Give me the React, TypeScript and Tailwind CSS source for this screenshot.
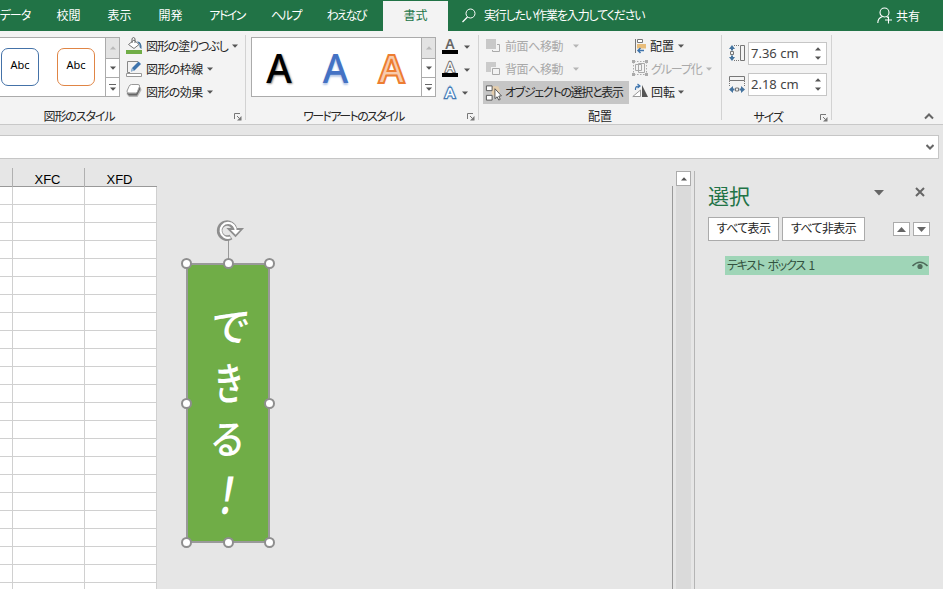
import type { ReactNode } from 'react'
import clsx from 'clsx'

const TABS = [
  { label: 'データ', cls: 'w-[56px] tracking-[-1px]' },
  { label: '校閲', cls: 'w-[51px]' },
  { label: '表示', cls: 'w-[51px]' },
  { label: '開発', cls: 'w-[51px]' },
  { label: 'アドイン', cls: 'w-[62px] tracking-[-1.6px]' },
  { label: 'ヘルプ', cls: 'w-[56px] tracking-[-1.4px]' },
  { label: 'わえなび', cls: 'w-[64px] tracking-[-1.9px]' },
]

const ROWS = Array.from({ length: 23 }, (_, i) => i)

// resize handles, relative to the text box
const HANDLES = [
  'left-[-7px] top-[-7px]',
  'left-[35px] top-[-7px]',
  'left-[76px] top-[-7px]',
  'left-[-7px] top-[133px]',
  'left-[76px] top-[133px]',
  'left-[-7px] top-[272px]',
  'left-[35px] top-[272px]',
  'left-[76px] top-[272px]',
]

function Caret({ up, className }: { up?: boolean; className?: string }) {
  return (
    <svg width="6" height="4" viewBox="0 0 6 4" className={clsx('shrink-0', className ?? 'text-[#555]')}>
      <path d={up ? 'M0 3.500h6L3 .3z' : 'M0 .5h6L3 3.700z'} fill="currentColor" />
    </svg>
  )
}

function Launcher() {
  return (
    <svg width="8" height="8" viewBox="0 0 8 8" className="shrink-0" fill="none" stroke="#777">
      <path d="M.5 6V.5H6M3 3l2.500 2.500" />
      <path d="M7.500 3v4.500H3L7.500 3z" fill="#777" stroke="none" />
    </svg>
  )
}

function GalleryScroll() {
  return (
    <div className="flex w-[14px] shrink-0 flex-col border-l border-[#ababab]">
      <div className="flex h-[20px] items-center justify-center bg-[#e3e3e3]">
        <Caret up className="text-[#b9b9b9]" />
      </div>
      <div className="flex h-[19px] items-center justify-center border-t border-[#ababab]">
        <Caret />
      </div>
      <div className="flex flex-1 flex-col items-center justify-center gap-[2px] border-t border-[#ababab]">
        <div className="h-px w-[7px] bg-[#666]" />
        <Caret />
      </div>
    </div>
  )
}

interface CommandProps {
  icon: ReactNode
  label: string
  track?: string
  caret?: string
  disabled?: boolean
  active?: boolean
}

function Command({ icon, label, track, caret, disabled, active }: CommandProps) {
  return (
    <div
      className={clsx(
        'flex h-[23px] items-center whitespace-nowrap',
        disabled ? 'text-[#a9a9a9]' : 'text-[#262626]',
        active && 'bg-[#c6c6c6]',
      )}
    >
      <div className="flex w-[20px] shrink-0">{icon}</div>
      <span className={clsx('-mt-[2px]', track)}>{label}</span>
      {caret && <Caret className={clsx('-mt-[2px]', caret, disabled ? 'text-[#b5b5b5]' : 'text-[#555]')} />}
    </div>
  )
}

function FillIcon() {
  return (
    <svg width="17" height="17" viewBox="0 0 17 17" fill="none" className="-mt-[3px]">
      <path d="M2.500 7.500L8 3l5 4.500-5 4z" fill="#fff" stroke="#777" />
      <path d="M6 6V1.500Q7.500-.5 9 1.500V6" stroke="#666" />
      <path d="M11 4.500q5-.5 4.500 7.500-2.500-1-2-4.500z" fill="#44739e" />
      <path d="M0 13h16v4H0z" fill="#70ad47" />
    </svg>
  )
}

function OutlineIcon() {
  return (
    <svg width="17" height="17" viewBox="0 0 17 17" fill="none" className="-mt-[2px]">
      <path d="M12 1.500H1.500v11H4" stroke="#888" />
      <path d="M5 11.500l1-3.500L12.500 1.500 15 4 8.500 10.500z" fill="#3e74ad" />
      <path d="M5 11.500L6 8l2.500 2.500z" fill="#9dbbd8" />
      <path d="M.5 13.500h15v3H.5z" fill="#fff" stroke="#999" />
    </svg>
  )
}

function EffectsIcon() {
  return (
    <svg width="17" height="16" viewBox="0 0 17 16" fill="none" className="-mt-[4px]">
      <path d="M5 4h9.500l1 3-4 7H3L.5 11z" fill="#b5b5b5" />
      <path d="M13.500 3l.8 3-3.300 6.500H3L.8 10l2 .5h7.500z" fill="#666" />
      <path d="M5.500 1.500H12q2 0 1.500 2l-2 5q-.5 1.500-2 1.500H3Q.5 10 1 8l2-4.500Q3.700 1.500 5.500 1.500z" fill="#fff" stroke="#999" />
    </svg>
  )
}

function LayerIcon({ back }: { back?: boolean }) {
  return (
    <svg width="16" height="16" viewBox="0 0 16 16" fill="none" className="-mt-[2px]">
      {back ? (
        <>
          <path d="M0 1h10v5H5v5H0z" fill="#cbcbcb" />
          <path d="M6.500 7.500h7v6h-7z" fill="#f3f3f3" stroke="#aaa" />
        </>
      ) : (
        <>
          <path d="M0 1h10v10H0z" fill="#c8c8c8" />
          <path d="M11 6.500h2.500v7h-7V12" stroke="#aaa" />
        </>
      )}
    </svg>
  )
}

function SelectionIcon() {
  return (
    <svg width="19" height="18" viewBox="0 0 19 18" fill="none" className="ml-[2px]">
      <path d="M7 2h7l2 5-5 6-4-3z" fill="#ecd0a6" opacity=".8" />
      <path d="M1.500 1.500h6v5h-6zM1.500 11.500h6v5h-6z" fill="#fff" stroke="#555" />
      <path d="M10.500 4.500V15l2.300-2 1.700 3.500 1.600-.8-1.600-3.400 2.800-.3z" fill="#fff" stroke="#444" strokeWidth=".9" />
    </svg>
  )
}

function AlignIcon() {
  return (
    <svg width="16" height="16" viewBox="0 0 16 16" fill="none" className="-mt-[2px] ml-[2px]">
      <path d="M1.500 1v14" stroke="#777" />
      <path d="M3.500 1.500h5v3h-5z" fill="#fff" stroke="#777" />
      <path d="M3 6h9v4.500H3z" fill="#e9bd7a" />
      <path d="M4 12.500h6M6.500 10L4 12.500 6.500 15" stroke="#3e74ad" strokeWidth="1.500" />
    </svg>
  )
}

function GroupIcon() {
  return (
    <svg width="17" height="16" viewBox="0 0 17 16" fill="none" stroke="#aaa" className="-mt-[4px]">
      <path d="M2 1.500h12M2 14.500h12M1.500 2v12M14.500 2v12" strokeDasharray="1.500 1.500" />
      <path d="M3.500 4.500h6v6h-6zM6.500 3.500h6v9h-6z" />
      <path d="M0 0h3v3H0zM13 0h3v3h-3zM0 13h3v3H0zM13 13h3v3h-3z" fill="#aaa" stroke="none" />
    </svg>
  )
}

function RotateIcon() {
  return (
    <svg width="17" height="16" viewBox="0 0 17 16" fill="none" className="-mt-[4px]">
      <path d="M.8 13.500h7.700V7z" fill="#fff" stroke="#999" />
      <path d="M10 2v12h6z" fill="#555" />
      <path d="M3.500 7Q3 3 7 3M5.500 1L8 3 5.500 5" stroke="#3e74ad" strokeWidth="1.200" />
    </svg>
  )
}

function HeightIcon() {
  return (
    <svg width="17" height="18" viewBox="0 0 17 18" fill="none" className="-mt-[2px]">
      <path d="M5 1.500h6M5 16.500h6" stroke="#777" strokeDasharray="1 1" />
      <path d="M11.500 1.500h4v15h-4zM1.500 7.500h3v3h-3z" stroke="#777" />
      <path d="M0 5l3-4 3 4zM0 13l3 4 3-4z" fill="#44739e" />
      <path d="M3 4v2.500M3 11.500V14" stroke="#44739e" strokeWidth="2" />
    </svg>
  )
}

function WidthIcon() {
  return (
    <svg width="17" height="18" viewBox="0 0 17 18" fill="none" className="-mt-[2px]">
      <path d="M.5 6v6M15.500 6v6" stroke="#777" strokeDasharray="1 1" />
      <path d="M.5 1.500h15v4H.5zM6.500 13h3v3h-3z" stroke="#777" />
      <path d="M4 11L0 14.500 4 18zM12 11l4 3.500-4 3.500z" fill="#44739e" />
      <path d="M3 14.500h2.500M10.500 14.500H13" stroke="#44739e" strokeWidth="2" />
    </svg>
  )
}

function SizeField({ icon, value }: { icon: ReactNode; value: string }) {
  return (
    <div className="flex items-center gap-[2px]">
      {icon}
      <div className="flex h-[23px] w-[79px] items-center justify-between border border-[#c6c6c6] bg-white pl-[2px] pr-[5px] font-['Noto_Sans',sans-serif] text-[13px] text-[#444]">
        <span className="-mt-[2px]">{value}</span>
        <div className="flex flex-col gap-[5px]">
          <Caret up />
          <Caret />
        </div>
      </div>
    </div>
  )
}

function TabBar() {
  return (
    <div className="flex h-[31px] items-center bg-[#217346] text-white">
      <div className="-ml-[13px] flex w-[382px]">
        {TABS.map((t) => (
          <div key={t.label} className={clsx('-mt-px shrink-0 whitespace-nowrap text-center', t.cls)}>
            {t.label}
          </div>
        ))}
      </div>
      <div className="ml-[14px] flex h-[30px] w-[65px] shrink-0 items-center justify-center self-end bg-[#f3f3f3] pb-[2px] text-[#217346]">
        書式
      </div>
      <svg width="14" height="15" viewBox="0 0 14 15" fill="none" stroke="#fff" className="ml-[14px]">
        <circle cx="8.500" cy="5.500" r="4.500" />
        <path d="M5.500 9L.5 14" strokeWidth="1.300" />
      </svg>
      <span className="-mt-px ml-[8px] whitespace-nowrap tracking-[-1.15px]">実行したい作業を入力してください</span>
      <svg width="16" height="17" viewBox="0 0 16 17" fill="none" stroke="#fff" className="ml-auto" strokeWidth="1.100">
        <circle cx="7.500" cy="5.500" r="4.500" />
        <path d="M.8 16q0-5 4.700-6.500M9.500 9.500l1.500 1M11.500 9.500v7M8 13h7" />
      </svg>
      <span className="ml-[3px] mr-[23px]">共有</span>
    </div>
  )
}

function Ribbon() {
  return (
    <div className="flex h-[94px] border-b border-[#c8c8c8] bg-[#f3f3f3] text-[#262626]">
      <section className="my-[4px] flex w-[246px] shrink-0 flex-col border-r border-[#d2d2d2]">
        <div className="flex h-[70px]">
          <div className="mt-[2px] flex h-[60px] w-[120px] border border-l-0 border-[#ababab] bg-white">
            <div className="flex flex-1 items-center gap-[18px] pl-px font-['Noto_Sans',sans-serif] text-[11px] text-black">
              <div className="flex h-[38px] w-[38px] items-center justify-center rounded-[7px] border border-[#4472a8] pb-[4px]">Abc</div>
              <div className="flex h-[38px] w-[38px] items-center justify-center rounded-[7px] border border-[#e08545] pb-[4px]">Abc</div>
            </div>
            <GalleryScroll />
          </div>
          <div className="ml-[6px]">
            <Command icon={<FillIcon />} label="図形の塗りつぶし" track="tracking-[-1.1px]" caret="ml-[4px]" />
            <Command icon={<OutlineIcon />} label="図形の枠線" track="tracking-[-0.6px]" caret="ml-[4px]" />
            <Command icon={<EffectsIcon />} label="図形の効果" track="tracking-[-0.6px]" caret="ml-[4px]" />
          </div>
        </div>
        <div className="flex items-center">
          <span className="w-[158px] pt-[3px] text-center tracking-[-1.1px]">図形のスタイル</span>
          <div className="ml-auto mr-[3px] pt-[5px]"><Launcher /></div>
        </div>
      </section>

      <section className="my-[4px] flex w-[233px] shrink-0 flex-col border-r border-[#d2d2d2] pl-[5px]">
        <div className="flex h-[70px]">
          <div className="mt-[2px] flex h-[60px] w-[185px] border border-[#ababab] bg-white">
            <div className="flex flex-1 items-center pt-[2px] font-['Noto_Sans',sans-serif] text-[39px] font-medium leading-[58px]">
              <span className="w-[54px] text-center text-black [text-shadow:1px_1px_2px_#888]">A</span>
              <span className="w-[59px] text-center text-[#4472c4] [text-shadow:0_2px_2px_#b5c7e7]">A</span>
              <span className="w-[53px] text-center font-semibold text-[#f8cbad] [-webkit-text-stroke:2px_#ed7d31]">A</span>
            </div>
            <GalleryScroll />
          </div>
          <div className="ml-[6px] font-['Noto_Sans',sans-serif] text-[14px] leading-[12px]">
            <div className="flex h-[23px] items-center gap-[6px]">
              <div className="-mt-px h-[16px] w-[16px] border-b-4 border-black text-center font-semibold text-[#666]">A</div>
              <Caret />
            </div>
            <div className="flex h-[23px] items-center gap-[6px]">
              <div className="-mt-px h-[16px] w-[16px] border-b-4 border-black text-center text-white [-webkit-text-stroke:2.200px_#777] [paint-order:stroke]">A</div>
              <Caret />
            </div>
            <div className="flex h-[23px] items-center gap-[4px] text-[15px]">
              <div className="-mt-px h-[13px] w-[16px] text-center font-medium text-white [-webkit-text-stroke:2.500px_#3e74ad] [paint-order:stroke] [text-shadow:0_0_3px_#6fa8e0]">A</div>
              <Caret />
            </div>
          </div>
        </div>
        <div className="flex items-center">
          <span className="w-[205px] pt-[3px] text-center tracking-[-1.6px]">ワードアートのスタイル</span>
          <div className="ml-auto mr-[3px] pt-[5px]"><Launcher /></div>
        </div>
      </section>

      <section className="my-[4px] flex w-[243px] shrink-0 flex-col border-r border-[#d2d2d2] pl-[4px]">
        <div className="flex h-[70px]">
          <div className="w-[146px]">
            <div className="pl-[3px]">
              <Command icon={<LayerIcon />} label="前面へ移動" track="-ml-px tracking-[-0.4px]" caret="ml-[10px]" disabled />
              <Command icon={<LayerIcon back />} label="背面へ移動" track="-ml-px tracking-[-0.4px]" caret="ml-[10px]" disabled />
            </div>
            <Command icon={<SelectionIcon />} label="オブジェクトの選択と表示" track="ml-[2px] tracking-[-1.3px]" active />
          </div>
          <div className="ml-[3px]">
            <Command icon={<AlignIcon />} label="配置" track="-ml-[2px]" caret="ml-[4px]" />
            <Command icon={<GroupIcon />} label="グループ化" track="-ml-px tracking-[-1.1px]" caret="ml-[4px]" disabled />
            <Command icon={<RotateIcon />} label="回転" track="-ml-px" caret="ml-[3px]" />
          </div>
        </div>
        <span className="w-[234px] pt-[3px] text-center">配置</span>
      </section>

      <section className="my-[4px] flex w-[110px] shrink-0 flex-col border-r border-[#d2d2d2] pl-[7px]">
        <div className="flex h-[70px] shrink-0 flex-col gap-[8px] pt-[7px]">
          <SizeField icon={<HeightIcon />} value="7.36 cm" />
          <SizeField icon={<WidthIcon />} value="2.18 cm" />
        </div>
        <div className="flex items-center">
          <span className="w-[78px] pt-[3px] text-center tracking-[-1.2px]">サイズ</span>
          <div className="ml-auto mr-[3px] pt-[5px]"><Launcher /></div>
        </div>
      </section>

      <svg width="10" height="7" viewBox="0 0 10 7" fill="none" stroke="#666" strokeWidth="2" className="mb-[4px] ml-auto mr-[9px] self-end">
        <path d="M1 5.500l4-4 4 4" />
      </svg>
    </div>
  )
}

function Sheet() {
  return (
    <div className="relative w-[672px] shrink-0 overflow-hidden">
      <div className="w-[157px] pt-[9px]">
        <div className="grid h-[19px] grid-cols-[12px_72px_73px] border-b border-[#999] text-center font-['Liberation_Sans',sans-serif] text-[13px] leading-[23px] text-black">
          <div />
          <div className="border-l border-[#b0b0b0] pr-[2px]">XFC</div>
          <div className="border-l border-[#b0b0b0] pr-[3px]">XFD</div>
        </div>
        {ROWS.map((r) => (
          <div key={r} className="grid h-[18px] grid-cols-[12px_72px_73px] border-b border-[#d0d0d0] bg-white">
            <div />
            <div className="border-l border-[#d0d0d0]" />
            <div className="border-x border-[#d0d0d0]" />
          </div>
        ))}
      </div>

      {/* selected text box with its rotate handle */}
      <div className="absolute left-[186px] top-[104px] h-[280px] w-[84px] border-2 border-[#999] bg-[#70ad47]">
        <div className="mt-[32px] flex flex-col items-center font-['Noto_Sans_CJK_JP',sans-serif] text-[40px] font-medium leading-[56px] text-white">
          <span className="ml-[4px] h-[56px] -skew-x-6 -skew-y-3">で</span>
          <span className="h-[56px] scale-x-[.78] scale-y-[1.12] skew-x-3 -skew-y-3">き</span>
          <span className="h-[56px] scale-x-[.9] -skew-x-6">る</span>
          <span className="h-[56px] scale-y-[1.25] -skew-x-12">！</span>
        </div>
        <svg width="32" height="44" viewBox="0 0 32 44" fill="none" className="absolute left-[27px] top-[-48px]">
          <path d="M13.500 22v22" stroke="#999" />
          <path d="M19.500 12.500a7.500 7.500 0 1 0-3.500 7.500" stroke="#8e8e8e" strokeWidth="5.500" />
          <path d="M13.500 12H27l-6.500 7z" fill="#fff" stroke="#8e8e8e" strokeWidth="1.800" />
          <path d="M20.500 14.500a7.500 7.500 0 1 0-5 6" stroke="#fff" strokeWidth="2.200" />
        </svg>
        {HANDLES.map((pos) => (
          <div key={pos} className={clsx('absolute h-[11px] w-[11px] rounded-full border-2 border-[#8e8e8e] bg-white', pos)} />
        ))}
      </div>
    </div>
  )
}

function SelectionPane() {
  return (
    <aside className="mt-[12px] flex-1 border-l border-[#b5b5b5] pl-[13px]">
      <div className="flex h-[46px] items-center pt-[4px]">
        <h2 className="-mt-[2px] text-[21px] text-[#217346]">選択</h2>
        <svg width="10" height="6" viewBox="0 0 10 6" className="mb-[7px] ml-auto">
          <path d="M0 0h10L5 5.500z" fill="#666" />
        </svg>
        <svg width="10" height="10" viewBox="0 0 10 10" stroke="#666" strokeWidth="2" className="mb-[8px] ml-[31px] mr-[18px]">
          <path d="M1 1l8 8M9 1L1 9" />
        </svg>
      </div>
      <div className="flex items-center text-[#262626]">
        <button className="h-[24px] w-[71px] border border-[#ababab] bg-white pb-[2px] tracking-[-0.6px]">すべて表示</button>
        <button className="ml-[3px] h-[24px] w-[83px] border border-[#ababab] bg-white pb-[2px] tracking-[-0.6px]">すべて非表示</button>
        <button className="ml-[28px] flex h-[14px] w-[17px] items-center justify-center border border-[#ababab] bg-white">
          <svg width="9" height="5" viewBox="0 0 9 5"><path d="M0 5h9L4.500 0z" fill="#666" /></svg>
        </button>
        <button className="ml-[3px] flex h-[14px] w-[17px] items-center justify-center border border-[#ababab] bg-white">
          <svg width="9" height="5" viewBox="0 0 9 5"><path d="M0 0h9L4.500 5z" fill="#666" /></svg>
        </button>
      </div>
      <div className="ml-[17px] mt-[15px] flex h-[19px] w-[204px] items-center justify-between bg-[#9fd5b7] pl-[2px] pr-px text-[#33523f]">
        <span className="-mt-px whitespace-nowrap tracking-[-1.2px] [word-spacing:2px]">テキスト ボックス 1</span>
        <svg width="16" height="9" viewBox="0 0 16 9" fill="none">
          <path d="M.5 5Q8-2.500 15.500 5" stroke="#4f6a5a" strokeWidth="1.600" />
          <circle cx="8" cy="5.500" r="2.600" fill="#4f6a5a" />
        </svg>
      </div>
    </aside>
  )
}

export default function App() {
  return (
    <div className="flex h-[589px] w-[943px] flex-col overflow-hidden bg-[#e6e6e6] font-['Noto_Sans_CJK_JP',sans-serif] text-[12px] leading-[18px] [font-feature-settings:'palt']">
      <TabBar />
      <Ribbon />
      <div className="mt-[10px] flex h-[24px] w-[939px] shrink-0 items-center justify-end border border-l-0 border-[#c6c6c6] bg-white pr-[4px]">
        <svg width="8" height="6" viewBox="0 0 8 6" fill="none" stroke="#666" strokeWidth="2">
          <path d="M.5 1L4 4.500 7.500 1" />
        </svg>
      </div>
      <div className="flex min-h-0 flex-1">
        <Sheet />
        <div className="mt-[27px] w-px bg-[#999]" />
        <div className="ml-[3px] mr-[3px] mt-[12px] w-[15px] bg-[#dadada]">
          <div className="flex h-[15px] items-center justify-center border border-[#ababab] bg-white">
            <Caret up />
          </div>
        </div>
        <SelectionPane />
      </div>
    </div>
  )
}
